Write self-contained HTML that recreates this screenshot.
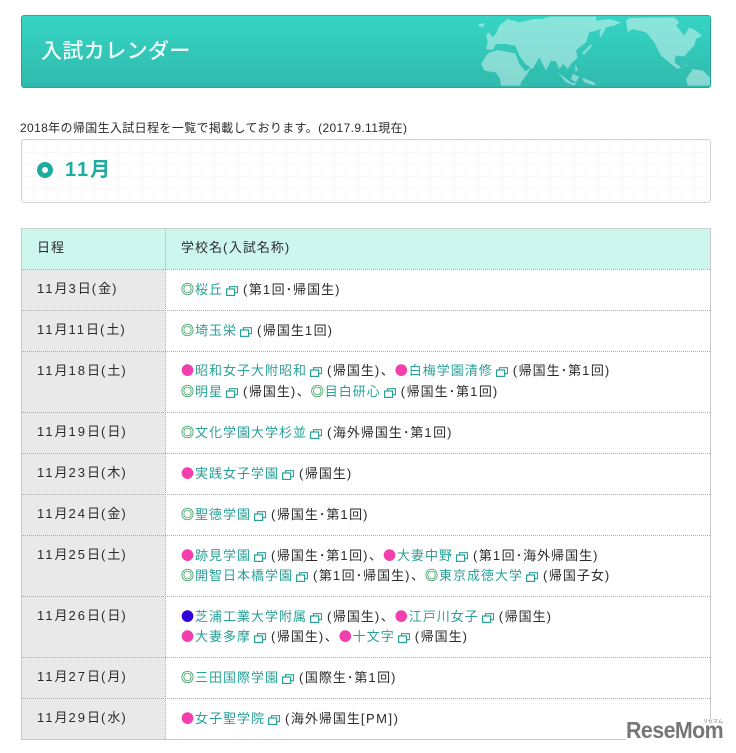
<!DOCTYPE html>
<html lang="ja">
<head>
<meta charset="utf-8">
<title>入試カレンダー</title>
<style>
html,body{margin:0;padding:0;background:#fff;}
body{width:736px;height:753px;position:relative;overflow:hidden;font-family:"Liberation Sans","Noto Sans CJK JP",sans-serif;color:#2b2b2b;}
.abs{position:absolute;}
#hd{left:21px;top:15px;width:688px;height:71px;border:1px solid #25a79b;border-radius:3px;background:linear-gradient(#36d5c4,#2fbaad);overflow:hidden;}
#hd svg{position:absolute;left:-22px;top:-16px;}
#ttl{left:41px;top:37px;font-size:21px;line-height:30px;color:#effbf9;white-space:nowrap;font-weight:500;letter-spacing:.4px;}
#intro{left:20px;top:120px;font-size:12px;line-height:16px;color:#2b2b2b;white-space:nowrap;letter-spacing:.36px;}
#box{left:21px;top:139px;width:688px;height:62px;border:1px solid #d2d2d2;border-radius:3px;background-color:#fff;background-image:linear-gradient(#f8f8f8 1px,transparent 1px),linear-gradient(90deg,#f8f8f8 1px,transparent 1px);background-size:12px 12px;}
#ring{left:37px;top:162px;width:6px;height:6px;border:5px solid #1eaba0;border-radius:50%;background:#fff;}
#mon{left:65px;top:155px;font-size:20px;line-height:30px;font-weight:700;color:#1eaba0;white-space:nowrap;letter-spacing:2px;}
.bg{position:absolute;}
.h{height:1px;left:21px;width:690px;background-image:linear-gradient(90deg,#aaa 50%,transparent 50%);background-size:2px 1px;}
.l{position:absolute;white-space:nowrap;font-size:13px;line-height:20px;letter-spacing:1px;color:#2b2b2b;}
.l a{color:#2aa198;text-decoration:none;}
.l s{text-decoration:none;letter-spacing:1.5px;}
.d s{letter-spacing:2px;}
.g,.p,.b{font-family:"Noto Sans CJK JP",sans-serif;}
.g{color:#2f9a55;-webkit-text-stroke:.3px #2f9a55;}
.p{color:#f23fad;}
.b{color:#3300dd;}
.i{display:inline-block;width:12px;height:10px;margin:0 5px 0 3px;vertical-align:-2px;}
#cover{left:626px;top:719px;width:110px;height:34px;background:#fff;}
#logo{left:626px;top:716px;font-size:23px;line-height:28px;font-weight:700;color:#777;letter-spacing:-.6px;white-space:nowrap;transform:scaleX(.93);transform-origin:0 0;}
#kana{left:703px;top:719px;font-size:5px;line-height:6px;color:#777;white-space:nowrap;}
</style>
</head>
<body>
<div class="abs" id="hd">
<svg width="736" height="90" viewBox="0 0 736 90">
<g transform="translate(476,14) scale(.3333)" fill="#fff" fill-opacity=".42">
<path d="M30 62L40 55 50 70 62 55 70 35 95 15 130 25 175 15 200 15 220 8 360 8 360 50 340 55 330 85 310 100 300 110 305 130 285 150 275 165 262 150 250 165 240 142 225 140 210 170 190 130 170 165 148 150 130 125 118 95 90 90 60 90 50 108 30 105 35 85Z"/>
<path d="M8 30L25 28 22 38 10 38Z"/>
<path d="M15 150L35 118 65 108 118 118 130 150 148 172 168 158 150 185 135 205 133 215 75 215 72 195 60 175 25 170Z"/>
<path d="M318 118L345 90 348 96 325 122ZM298 150L306 170 298 172ZM245 175L285 205 300 208 295 214 270 205ZM290 180L310 188 300 205 285 195ZM318 190L355 205 358 215 325 205Z"/>
</g>
<g transform="translate(596,14) scale(.3333)" fill="#fff" fill-opacity=".42">
<path d="M0 20L40 15 75 25 55 35 30 40 15 70 10 60 15 45 0 50Z"/>
<path d="M90 20L100 12 235 10 250 25 240 35 265 65 280 40 300 50 318 65 300 75 295 95 275 115 265 128 240 125 235 145 255 160 270 155 245 165 225 150 195 125 175 85 150 55 110 45 95 55Z"/>
<path d="M270 195L290 165 320 170 342 190 342 215 275 215Z"/>
<path d="M260 150L285 158 270 155Z"/>
</g>
</svg>
</div>
<div class="abs" id="ttl">入試カレンダー</div>
<div class="abs" id="intro">2018年の帰国生入試日程を一覧で掲載しております。(2017.9.11現在)</div>
<div class="abs" id="box"></div>
<div class="abs" id="ring"></div>
<div class="abs" id="mon">11月</div>

<div class="bg" style="left:21px;top:228px;width:690px;height:41px;background:#cdf7ee;"></div>
<div class="bg" style="left:21px;top:269px;width:144px;height:470px;background:#e9e9e9;"></div>
<div class="bg" style="left:21px;top:228px;width:690px;height:1px;background:#c8d8d4;"></div>
<div class="bg" style="left:21px;top:228px;width:1px;height:511px;background:#c9c9c9;"></div>
<div class="bg" style="left:710px;top:228px;width:1px;height:511px;background:#c9c9c9;"></div>
<div class="bg" style="left:21px;top:739px;width:690px;height:1px;background:#c9c9c9;"></div>
<div class="bg" style="left:165px;top:228px;width:1px;height:511px;background-image:linear-gradient(#aaa 50%,transparent 50%);background-size:1px 2px;"></div>
<div class="bg h" style="top:269px"></div>
<div class="bg h" style="top:310px"></div>
<div class="bg h" style="top:351px"></div>
<div class="bg h" style="top:412px"></div>
<div class="bg h" style="top:453px"></div>
<div class="bg h" style="top:494px"></div>
<div class="bg h" style="top:535px"></div>
<div class="bg h" style="top:596px"></div>
<div class="bg h" style="top:657px"></div>
<div class="bg h" style="top:698px"></div>

<svg width="0" height="0" style="position:absolute"><symbol id="w" viewBox="0 0 12 10"><path d="M3.5 2.5V.7h8v6H8.5" fill="none" stroke="#2aa198" stroke-width="1.1"/><rect x=".6" y="3" width="8" height="6.4" fill="none" stroke="#2aa198" stroke-width="1.2"/></symbol></svg>

<div class="l" style="left:37px;top:238px">日程</div>
<div class="l" style="left:181px;top:238px">学校名<s>(</s>入試名称<s>)</s></div>

<div class="l d" style="left:37px;top:279px"><s>11</s>月<s>3</s>日<s>(</s>金<s>)</s></div>
<div class="l" style="left:181px;top:279px"><span class="g">◎</span><a>桜丘</a><svg class="i"><use href="#w"/></svg><s>(</s>第<s>1</s>回･帰国生<s>)</s></div>

<div class="l d" style="left:37px;top:320px"><s>11</s>月<s>11</s>日<s>(</s>土<s>)</s></div>
<div class="l" style="left:181px;top:320px"><span class="g">◎</span><a>埼玉栄</a><svg class="i"><use href="#w"/></svg><s>(</s>帰国生<s>1</s>回<s>)</s></div>

<div class="l d" style="left:37px;top:361px"><s>11</s>月<s>18</s>日<s>(</s>土<s>)</s></div>
<div class="l" style="left:181px;top:360px"><span class="p">●</span><a>昭和女子大附昭和</a><svg class="i"><use href="#w"/></svg><s>(</s>帰国生<s>)</s>、<span class="p">●</span><a>白梅学園清修</a><svg class="i"><use href="#w"/></svg><s>(</s>帰国生･第<s>1</s>回<s>)</s></div>
<div class="l" style="left:181px;top:381px"><span class="g">◎</span><a>明星</a><svg class="i"><use href="#w"/></svg><s>(</s>帰国生<s>)</s>、<span class="g">◎</span><a>目白研心</a><svg class="i"><use href="#w"/></svg><s>(</s>帰国生･第<s>1</s>回<s>)</s></div>

<div class="l d" style="left:37px;top:422px"><s>11</s>月<s>19</s>日<s>(</s>日<s>)</s></div>
<div class="l" style="left:181px;top:422px"><span class="g">◎</span><a>文化学園大学杉並</a><svg class="i"><use href="#w"/></svg><s>(</s>海外帰国生･第<s>1</s>回<s>)</s></div>

<div class="l d" style="left:37px;top:463px"><s>11</s>月<s>23</s>日<s>(</s>木<s>)</s></div>
<div class="l" style="left:181px;top:463px"><span class="p">●</span><a>実践女子学園</a><svg class="i"><use href="#w"/></svg><s>(</s>帰国生<s>)</s></div>

<div class="l d" style="left:37px;top:504px"><s>11</s>月<s>24</s>日<s>(</s>金<s>)</s></div>
<div class="l" style="left:181px;top:504px"><span class="g">◎</span><a>聖徳学園</a><svg class="i"><use href="#w"/></svg><s>(</s>帰国生･第<s>1</s>回<s>)</s></div>

<div class="l d" style="left:37px;top:545px"><s>11</s>月<s>25</s>日<s>(</s>土<s>)</s></div>
<div class="l" style="left:181px;top:545px"><span class="p">●</span><a>跡見学園</a><svg class="i"><use href="#w"/></svg><s>(</s>帰国生･第<s>1</s>回<s>)</s>、<span class="p">●</span><a>大妻中野</a><svg class="i"><use href="#w"/></svg><s>(</s>第<s>1</s>回･海外帰国生<s>)</s></div>
<div class="l" style="left:181px;top:565px"><span class="g">◎</span><a>開智日本橋学園</a><svg class="i"><use href="#w"/></svg><s>(</s>第<s>1</s>回･帰国生<s>)</s>、<span class="g">◎</span><a>東京成徳大学</a><svg class="i"><use href="#w"/></svg><s>(</s>帰国子女<s>)</s></div>

<div class="l d" style="left:37px;top:606px"><s>11</s>月<s>26</s>日<s>(</s>日<s>)</s></div>
<div class="l" style="left:181px;top:606px"><span class="b">●</span><a>芝浦工業大学附属</a><svg class="i"><use href="#w"/></svg><s>(</s>帰国生<s>)</s>、<span class="p">●</span><a>江戸川女子</a><svg class="i"><use href="#w"/></svg><s>(</s>帰国生<s>)</s></div>
<div class="l" style="left:181px;top:626px"><span class="p">●</span><a>大妻多摩</a><svg class="i"><use href="#w"/></svg><s>(</s>帰国生<s>)</s>、<span class="p">●</span><a>十文字</a><svg class="i"><use href="#w"/></svg><s>(</s>帰国生<s>)</s></div>

<div class="l d" style="left:37px;top:667px"><s>11</s>月<s>27</s>日<s>(</s>月<s>)</s></div>
<div class="l" style="left:181px;top:667px"><span class="g">◎</span><a>三田国際学園</a><svg class="i"><use href="#w"/></svg><s>(</s>国際生･第<s>1</s>回<s>)</s></div>

<div class="l d" style="left:37px;top:708px"><s>11</s>月<s>29</s>日<s>(</s>水<s>)</s></div>
<div class="l" style="left:181px;top:708px"><span class="p">●</span><a>女子聖学院</a><svg class="i"><use href="#w"/></svg><s>(</s>海外帰国生<s>[PM])</s></div>

<div class="abs" id="cover"></div>
<div class="abs" id="logo">ReseMom</div>
<div class="abs" id="kana">リセマム</div>
</body>
</html>
